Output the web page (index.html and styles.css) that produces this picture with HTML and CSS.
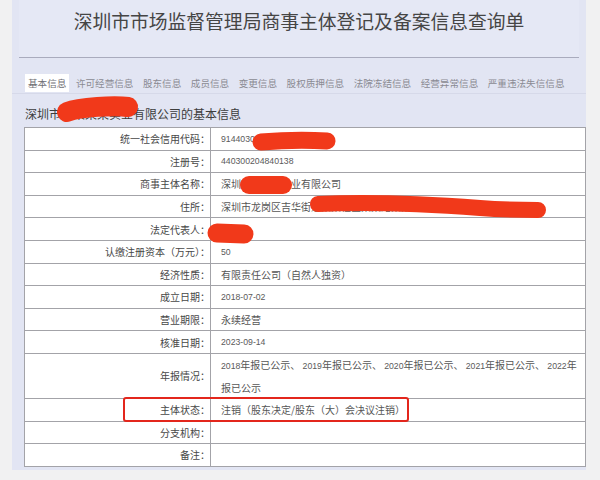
FILE: index.html
```html
<!DOCTYPE html>
<html lang="zh-CN">
<head>
<meta charset="utf-8">
<title>深圳市市场监督管理局商事主体登记及备案信息查询单</title>
<link rel="stylesheet" href="styles.css">
</head>
<body>
<div class="page">
  <div class="header">
    <h1 class="title">深圳市市场监督管理局商事主体登记及备案信息查询单</h1>
  </div>
  <div class="tabs">
    <span class="tab active">基本信息</span>
    <span class="tab">许可经营信息</span>
    <span class="tab">股东信息</span>
    <span class="tab">成员信息</span>
    <span class="tab">变更信息</span>
    <span class="tab">股权质押信息</span>
    <span class="tab">法院冻结信息</span>
    <span class="tab">经营异常信息</span>
    <span class="tab">严重违法失信信息</span>
  </div>
  <div class="subtitle">深圳市某某某某实业有限公司的基本信息</div>
  <div class="info-table">
    <div class="label">统一社会信用代码：</div><div class="value"><span class="num">91440300MA5F8XXXX</span></div>
    <div class="label">注册号：</div><div class="value"><span class="num">440300204840138</span></div>
    <div class="label">商事主体名称：</div><div class="value">深圳市某某某实业有限公司</div>
    <div class="label">住所：</div><div class="value">深圳市龙岗区吉华街道某某社区某某路某某大厦</div>
    <div class="label">法定代表人：</div><div class="value"></div>
    <div class="label">认缴注册资本（万元）：</div><div class="value"><span class="num">50</span></div>
    <div class="label">经济性质：</div><div class="value">有限责任公司（自然人独资）</div>
    <div class="label">成立日期：</div><div class="value"><span class="num">2018-07-02</span></div>
    <div class="label">营业期限：</div><div class="value">永续经营</div>
    <div class="label">核准日期：</div><div class="value"><span class="num">2023-09-14</span></div>
    <div class="label tall">年报情况：</div><div class="value tall"><span class="num">2018</span>年报已公示、 <span class="num">2019</span>年报已公示、 <span class="num">2020</span>年报已公示、 <span class="num">2021</span>年报已公示、 <span class="num">2022</span>年<br>报已公示</div>
    <div class="label">主体状态：</div><div class="value">注销（股东决定/股东（大）会决议注销）</div>
    <div class="label">分支机构：</div><div class="value"></div>
    <div class="label">备注：</div><div class="value"></div>
  </div>
</div>
<svg class="marks" width="600" height="480" viewBox="0 0 600 480">
  <path d="M67 112 C 80 107, 115 105, 128 107" stroke="#f1391a" stroke-width="20" stroke-linecap="round" fill="none"/>
  <path d="M261 142 C 285 140, 310 140, 327 141" stroke="#f1391a" stroke-width="17" stroke-linecap="round" fill="none"/>
  <path d="M249 185 L 283 185" stroke="#f1391a" stroke-width="18" stroke-linecap="round" fill="none"/>
  <path d="M318 204 C 380 201, 440 205, 480 208 C 505 210, 525 210, 538 210" stroke="#f1391a" stroke-width="16" stroke-linecap="round" fill="none"/>
  <path d="M217 233 L 244 234" stroke="#f1391a" stroke-width="19" stroke-linecap="round" fill="none"/>
</svg>
<div class="highlight"></div>
</body>
</html>
```
FILE: styles.css
```css
html, body {
  margin: 0;
  padding: 0;
}
body {
  width: 600px;
  height: 480px;
  overflow: hidden;
  background: #f1f1f2;
  font-family: "Noto Sans CJK SC", "Noto Sans", sans-serif;
  position: relative;
}
.page {
  margin-left: 12px;
  width: 574px;
  background: #e2e5f3;
  padding-bottom: 3px;
}
.header {
  margin: 0 7px;
  height: 57px;
  border-bottom: 1px solid #a9abbd;
  display: flex;
  justify-content: center;
  background: #e5e8f5;
}
.title {
  margin: 8px 0 0;
  font-size: 18.8px;
  font-weight: normal;
  color: #454545;
  line-height: 26px;
  height: 26px;
}
.tabs {
  display: flex;
  gap: 9.5px;
  margin-top: 16px;
  padding-left: 13px;
  border-bottom: 1px solid #d6d9e9;
  height: 19px;
}
.tab {
  font-size: 9.6px;
  color: #8a8a92;
  line-height: 18px;
  height: 18px;
  padding: 0 3px;
  margin: 0 -3px;
}
.tab.active {
  background: #ffffff;
  color: #6f6f75;
  margin-left: 0;
}
.subtitle {
  margin: 11px 0 0 13px;
  font-size: 12px;
  color: #3d3d3d;
  line-height: 18px;
  height: 22px;
}
.info-table {
  margin-left: 12px;
  display: grid;
  grid-template-columns: 186px 1fr;
  border-top: 1px solid #a3a3a8;
  border-left: 1px solid #a3a3a8;
  background: #fff;
}
.label, .value {
  height: 21.6px;
  border-right: 1px solid #a3a3a8;
  border-bottom: 1px solid #a3a3a8;
  font-size: 10px;
  display: flex;
  align-items: center;
  white-space: nowrap;
}
.label {
  justify-content: flex-end;
  color: #474747;
  padding-right: 0;
}
.value {
  padding-left: 10px;
  color: #565656;
}
.value.tall {
  display: block;
  height: 44px;
  line-height: 22px;
}
.label.tall {
  height: 44px;
}
.num {
  font-family: "Liberation Sans", sans-serif;
  font-size: 8.7px;
  color: #5a5a5a;
}
.marks {
  position: absolute;
  left: 0;
  top: 0;
  pointer-events: none;
}
.highlight {
  position: absolute;
  left: 123px;
  top: 397px;
  width: 282px;
  height: 21px;
  border: 2.5px solid #e3261c;
  border-radius: 3px;
}
```
